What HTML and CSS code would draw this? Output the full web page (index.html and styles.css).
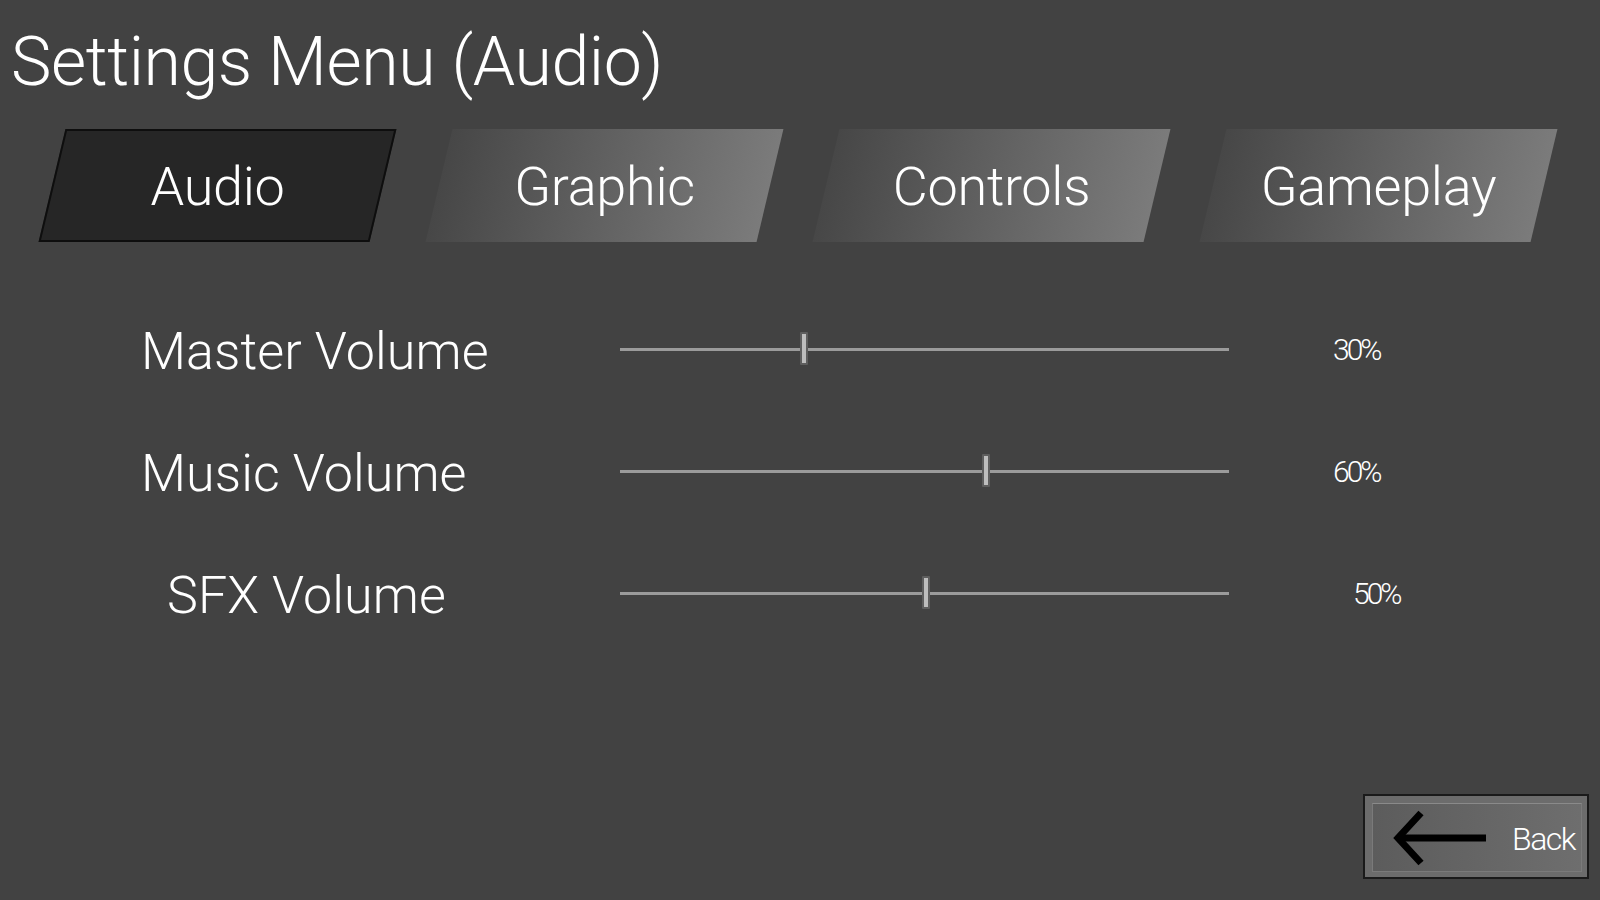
FILE: index.html
```html
<!DOCTYPE html>
<html lang="en">
<head>
<meta charset="utf-8">
<title>Settings Menu (Audio)</title>
<link rel="stylesheet" href="styles.css">
</head>
<body>
<div class="screen">
  <h1 class="title">Settings Menu (Audio)</h1>

  <nav class="tabs">
    <div class="tab tab--active">Audio</div>
    <div class="tab">Graphic</div>
    <div class="tab">Controls</div>
    <div class="tab">Gameplay</div>
  </nav>

  <section class="rows">
    <div class="row">
      <div class="label">Master Volume</div>
      <div class="slider"><div class="track"></div><div class="handle" style="left:30%"></div></div>
      <div class="value">30%</div>
    </div>
    <div class="row">
      <div class="label">Music Volume</div>
      <div class="slider"><div class="track"></div><div class="handle" style="left:60%"></div></div>
      <div class="value">60%</div>
    </div>
    <div class="row">
      <div class="label label--indent">SFX Volume</div>
      <div class="slider"><div class="track"></div><div class="handle" style="left:50%"></div></div>
      <div class="value value--indent">50%</div>
    </div>
  </section>

  <footer class="footer">
    <button class="back">
      <span class="back-inner">
        <svg class="back-arrow" width="96" height="56" viewBox="0 0 96 56">
          <polyline points="31,3 8,28 31,53" fill="none" stroke="#000" stroke-width="7" stroke-linejoin="miter"/>
          <line x1="9" y1="28" x2="96" y2="28" stroke="#000" stroke-width="7"/>
        </svg>
        <span class="back-text">Back</span>
      </span>
    </button>
  </footer>
</div>
</body>
</html>
```

FILE: styles.css
```css
* { box-sizing: border-box; }

html, body {
  margin: 0;
  padding: 0;
  background: #424242;
}

body {
  width: 1600px;
  height: 900px;
  overflow: hidden;
  font-family: Roboto, "Liberation Sans", sans-serif;
  font-weight: 300;
  color: #ffffff;
}

.screen {
  display: flex;
  flex-direction: column;
  height: 900px;
}

.title {
  margin: 0;
  padding: 28px 0 0 11px;
  font-size: 68px;
  line-height: 68px;
  font-weight: 300;
  letter-spacing: -0.4px;
}

.tabs {
  display: flex;
  gap: 56px;
  margin-top: 33px;
  padding-left: 52px;
}

.tab {
  position: relative;
  isolation: isolate;
  width: 331px;
  height: 113px;
  display: flex;
  align-items: center;
  justify-content: center;
  font-size: 54px;
  line-height: 1;
  padding-top: 3px;
  letter-spacing: -0.3px;
}

.tab::before {
  content: "";
  position: absolute;
  inset: 0;
  z-index: -1;
  transform: skewX(-13.4deg);
  background: linear-gradient(to right, #474747 0%, #5c5c5c 40%, #7b7b7b 100%);
}

.tab--active::before {
  background: #262626;
  border: 2px solid #0e0e0e;
}

.rows {
  margin-top: 46px;
  display: flex;
  flex-direction: column;
}

.row {
  height: 122px;
  display: grid;
  grid-template-columns: 479px 609px 1fr;
  align-items: center;
  padding-left: 141px;
}

.label {
  font-size: 52px;
  line-height: 1;
  letter-spacing: 0.1px;
  padding-top: 5px;
}

.label--indent { padding-left: 26px; }

.slider {
  position: relative;
  height: 36px;
  display: flex;
  align-items: center;
}

.track {
  width: 100%;
  height: 3px;
  background: #9b9b9b;
}

.handle {
  position: absolute;
  top: 1px;
  width: 8px;
  height: 33px;
  margin-left: -3px;
  background: #bdbdbd;
  border: 2px solid #5e5e5e;
  border-radius: 1px;
}

.value {
  padding-left: 104px;
  font-size: 30px;
  line-height: 1;
  letter-spacing: -3px;
  padding-top: 2px;
}

.value--indent { padding-left: 124px; }

.footer {
  margin-top: auto;
  display: flex;
  justify-content: flex-end;
  padding: 0 11px 21px 0;
}

.back {
  width: 226px;
  height: 85px;
  padding: 7px 5px 5px 7px;
  background: #6c6c6c;
  border: 2px solid #1a1a1a;
  font: inherit;
  color: inherit;
  cursor: pointer;
}

.back-inner {
  display: flex;
  align-items: center;
  justify-content: space-between;
  width: 100%;
  height: 100%;
  padding: 0 6px 0 17px;
  background: linear-gradient(to right, #5c5c5c, #6e6e6e);
  border: 1px solid #7a7a7a;
  border-top-color: #8a8a8a;
}

.back-arrow { display: block; }

.back-text {
  font-size: 32px;
  line-height: 1;
  letter-spacing: -1.5px;
  padding-top: 2px;
}
```
